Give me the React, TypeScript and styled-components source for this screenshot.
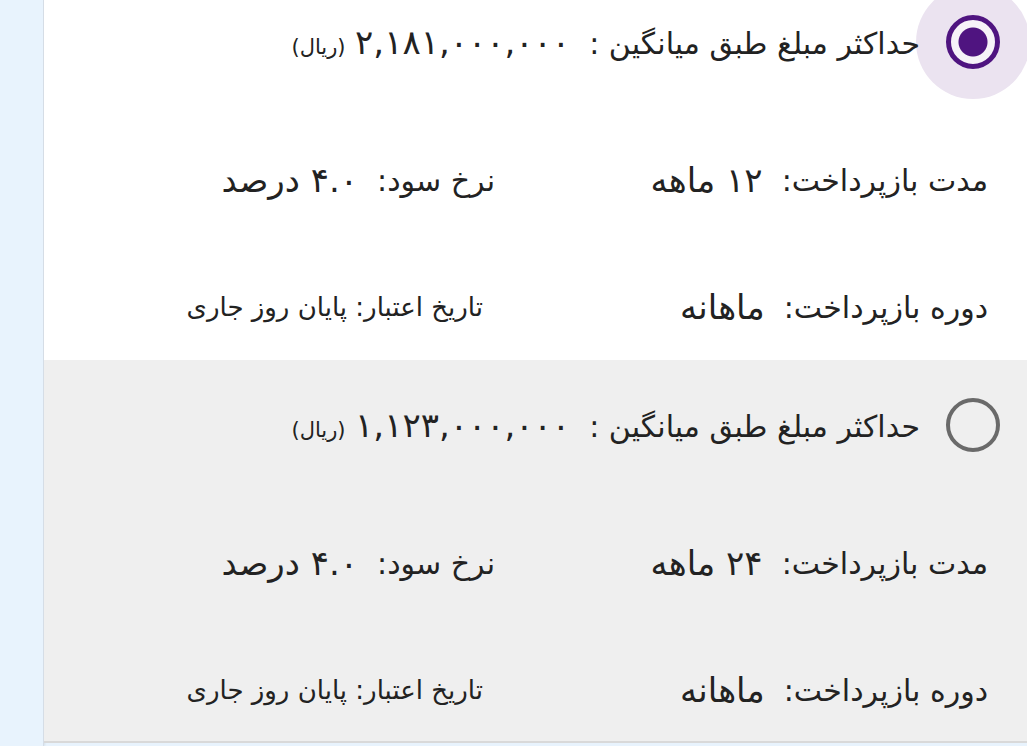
import React, { useState } from 'react';
import styled, { createGlobalStyle } from 'styled-components';

const GlobalStyle = createGlobalStyle`
  html, body {
    margin: 0;
    padding: 0;
    height: 100%;
    overflow: hidden;
    background: #e8f3fd;
  }
  * { box-sizing: border-box; }
`;

type Offer = {
	id: number;
	amount: string;
	months: string;
	rate: string;
	period: string;
	expiry: string;
};

const offers: Offer[] = [
	{ id: 1, amount: '۲,۱۸۱,۰۰۰,۰۰۰', months: '۱۲ ماهه', rate: '۴.۰ درصد', period: 'ماهانه', expiry: 'پایان روز جاری' },
	{ id: 2, amount: '۱,۱۲۳,۰۰۰,۰۰۰', months: '۲۴ ماهه', rate: '۴.۰ درصد', period: 'ماهانه', expiry: 'پایان روز جاری' },
];

function App() {
	const [selected, setSelected] = useState(1);
	return (
		<>
			<GlobalStyle />
			<Page>
				<Side />
				<List dir="rtl">
					{offers.map((o) => (
						<Card key={o.id} $active={selected === o.id} onClick={() => setSelected(o.id)}>
							<TitleRow>
								<Radio $checked={selected === o.id} />
								<Title>
									حداکثر مبلغ طبق میانگین :&nbsp;&nbsp;<Amount>{o.amount}</Amount> <Unit>(ریال)</Unit>
								</Title>
							</TitleRow>
							<Details>
								<Item>
									مدت بازپرداخت:&nbsp;&nbsp;<Value>{o.months}</Value>
								</Item>
								<Item>
									نرخ سود:&nbsp;&nbsp;<Value>{o.rate}</Value>
								</Item>
								<Item>
									دوره بازپرداخت:&nbsp;&nbsp;<Value>{o.period}</Value>
								</Item>
								<Item $small>تاریخ اعتبار: {o.expiry}</Item>
							</Details>
						</Card>
					))}
				</List>
			</Page>
		</>
	);
}

const Page = styled.div`
	display: flex;
	height: 746px;
	font-family: "DejaVu Sans", "Noto Sans", sans-serif;
	color: #222;
`;

const Side = styled.div`
	flex: 0 0 44px;
	background: #e8f3fd;
	border-right: 1px solid #d5dde6;
	box-shadow: 1px 0 2px rgba(0, 0, 0, 0.08);
`;

const List = styled.div`
	flex: 1;
	margin-top: -23px;
	overflow: hidden;
`;

const Card = styled.div<{ $active: boolean }>`
	background: ${(p) => (p.$active ? '#ffffff' : '#efefef')};
	padding: 38px 39px 31px 39px;
	border-bottom: 2px solid ${(p) => (p.$active ? 'transparent' : '#d9d9d9')};
	cursor: pointer;
	overflow: hidden;
`;

const TitleRow = styled.div`
	display: flex;
	align-items: center;
	gap: 26px;
	height: 54px;
	margin-right: -12px;
`;

const Radio = styled.span<{ $checked: boolean }>`
	flex: 0 0 54px;
	width: 54px;
	height: 54px;
	border-radius: 50%;
	border: ${(p) => (p.$checked ? '5px solid #4f1480' : '4px solid #6a6a6a')};
	box-shadow: ${(p) => (p.$checked ? '0 0 0 30px #ebe3f0' : 'none')};
	background: ${(p) =>
		p.$checked ? 'radial-gradient(circle, #4f1480 0 14px, #f6f2f8 15px)' : 'transparent'};
`;

const Title = styled.div`
	font-size: 30px;
	white-space: nowrap;
`;

const Amount = styled.span`
	font-size: 34px;
`;

const Unit = styled.span`
	font-size: 21px;
`;

const Details = styled.div`
	display: grid;
	grid-template-columns: 411px 411px;
	column-gap: 82px;
	row-gap: 87px;
	margin-top: 91px;
`;

const Item = styled.div<{ $small?: boolean }>`
	height: 40px;
	display: flex;
	align-items: center;
	font-size: ${(p) => (p.$small ? '26px' : '30px')};
	margin-right: ${(p) => (p.$small ? '12px' : '0')};
	white-space: nowrap;
`;

const Value = styled.span`
	font-size: 34px;
`;

export default App;
